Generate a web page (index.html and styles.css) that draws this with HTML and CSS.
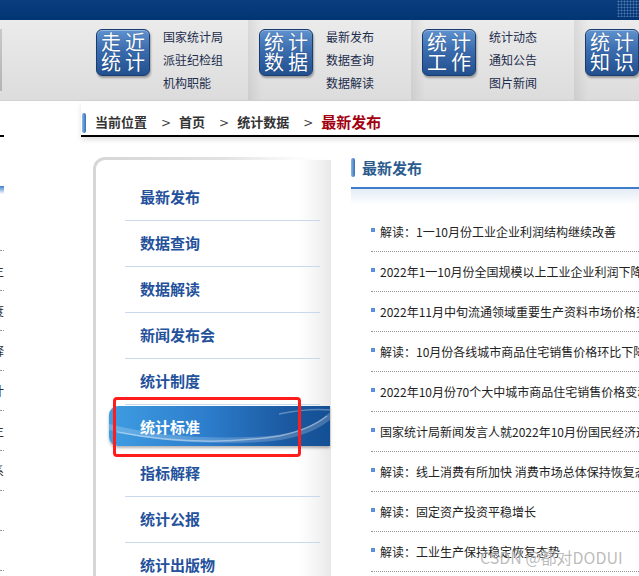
FILE: index.html
```html
<!DOCTYPE html>
<html lang="zh-CN">
<head>
    <meta charset="UTF-8">
    <meta name="viewport" content="width=device-width, initial-scale=1.0">
    <title>最新发布</title>
    <link rel="stylesheet" href="styles.css">
</head>
<body>
    <!-- 顶部蓝条 -->
    <div class="top-bar"></div>

    <!-- 导航栏 -->
    <div class="nav-bar">
        <div class="nav-lead"><span class="nav-edge"></span></div>
        <div class="nav-group">
            <div class="nav-box"><span><i>走</i><i>近</i></span><span><i>统</i><i>计</i></span></div>
            <div class="nav-links">
                <a href="#">国家统计局</a>
                <a href="#">派驻纪检组</a>
                <a href="#">机构职能</a>
            </div>
        </div>
        <div class="nav-group">
            <div class="nav-box"><span><i>统</i><i>计</i></span><span><i>数</i><i>据</i></span></div>
            <div class="nav-links">
                <a href="#">最新发布</a>
                <a href="#">数据查询</a>
                <a href="#">数据解读</a>
            </div>
        </div>
        <div class="nav-group">
            <div class="nav-box"><span><i>统</i><i>计</i></span><span><i>工</i><i>作</i></span></div>
            <div class="nav-links">
                <a href="#">统计动态</a>
                <a href="#">通知公告</a>
                <a href="#">图片新闻</a>
            </div>
        </div>
        <div class="nav-group">
            <div class="nav-box"><span><i>统</i><i>计</i></span><span><i>知</i><i>识</i></span></div>
            <div class="nav-links">
                <a href="#">统计标准</a>
                <a href="#">指标解释</a>
                <a href="#">统计百科</a>
            </div>
        </div>
    </div>

    <div class="main">
        <!-- 左侧被截断的栏 -->
        <div class="edge-col">
            <div class="edge-strip">
                <div class="edge-crumb"></div>
                <div class="edge-title"></div>
                <ul class="edge-list">
                    <li></li>
                    <li><span>统计用区划代码和城乡划分代码主</span></li>
                    <li><span>统计上大中小微型企业划分办法度</span></li>
                    <li><span>三次产业划分规定解释</span></li>
                    <li><span>国民经济行业分类统计</span></li>
                    <li><span>统计用产品分类目录主</span></li>
                    <li><span>战略性新兴产业分类体系</span></li>
                    <li></li>
                    <li></li>
                </ul>
            </div>
        </div>

        <div class="content">
            <!-- 当前位置 -->
            <div class="crumb">
                <span class="pill"></span>
                <span class="crumb-item">当前位置</span>
                <span class="crumb-sep">&gt;</span>
                <a class="crumb-item" href="#">首页</a>
                <span class="crumb-sep">&gt;</span>
                <a class="crumb-item" href="#">统计数据</a>
                <span class="crumb-sep">&gt;</span>
                <span class="crumb-current">最新发布</span>
            </div>

            <div class="body-row">
                <!-- 侧边菜单 -->
                <div class="side-panel">
                    <div class="side-inner">
                        <ul class="side-menu">
                            <li><a href="#">最新发布</a></li>
                            <li><a href="#">数据查询</a></li>
                            <li><a href="#">数据解读</a></li>
                            <li><a href="#">新闻发布会</a></li>
                            <li><a href="#">统计制度</a></li>
                            <li class="active">
                                <span class="active-bar">
                                    <svg width="221" height="40" viewBox="0 0 221 40">
                                        <path d="M0 18 Q 70 36 160 30 Q 200 26 221 6 L221 14 Q 196 34 150 36 Q 60 40 0 24 Z" fill="rgba(255,255,255,0.2)"/>
                                        <path d="M8 26 Q 90 42 170 30 Q 200 24 218 10" stroke="rgba(255,255,255,0.4)" stroke-width="1.5" fill="none"/>
                                        <path d="M170 8 Q 200 2 221 4" stroke="rgba(255,255,255,0.3)" stroke-width="1.5" fill="none"/>
                                    </svg>
                                </span>
                                <a href="#">统计标准</a>
                                <span class="mark"></span>
                            </li>
                            <li><a href="#">指标解释</a></li>
                            <li><a href="#">统计公报</a></li>
                            <li><a href="#">统计出版物</a></li>
                        </ul>
                    </div>
                </div>

                <!-- 最新发布列表 -->
                <div class="news">
                    <div class="news-title">
                        <span class="pill"></span>
                        <span class="news-title-text">最新发布</span>
                    </div>
                    <ul class="news-list">
                        <li><a href="#">解读：1一10月份工业企业利润结构继续改善</a></li>
                        <li><a href="#">2022年1一10月份全国规模以上工业企业利润下降3.0%</a></li>
                        <li><a href="#">2022年11月中旬流通领域重要生产资料市场价格变动情况</a></li>
                        <li><a href="#">解读：10月份各线城市商品住宅销售价格环比下降</a></li>
                        <li><a href="#">2022年10月份70个大中城市商品住宅销售价格变动情况</a></li>
                        <li><a href="#">国家统计局新闻发言人就2022年10月份国民经济运行情况答记者问</a></li>
                        <li><a href="#">解读：线上消费有所加快 消费市场总体保持恢复态势</a></li>
                        <li><a href="#">解读：固定资产投资平稳增长</a></li>
                        <li><a href="#">解读：工业生产保持稳定恢复态势</a></li>
                    </ul>
                </div>
            </div>
        </div>
    </div>

    <div class="watermark">CSDN @都对DODUI</div>
</body>
</html>
```

FILE: styles.css
```css
* {
    box-sizing: border-box;
}

body {
    margin: 0;
    padding: 0;
    width: 639px;
    height: 576px;
    overflow: hidden;
    position: relative;
    background-color: #fff;
    font-family: "Noto Sans CJK SC", "Liberation Sans", sans-serif;
}

a {
    color: inherit;
    text-decoration: none;
}

ul {
    list-style: none;
    margin: 0;
    padding: 0;
}

/* 顶部蓝条 */
.top-bar {
    height: 20px;
    background: linear-gradient(#0a3d7e, #023574);
    position: relative;
}

.top-bar::after {
    content: "";
    position: absolute;
    right: 0;
    top: 0;
    width: 22px;
    height: 17px;
    background-image: radial-gradient(rgba(140, 170, 215, 0.55) 0.8px, transparent 1.2px);
    background-size: 3px 3px;
}

/* 导航栏 */
.nav-bar {
    height: 81px;
    display: flex;
    width: 900px;
    background: linear-gradient(#ebebeb, #dcdcdc);
    border-bottom: 1px solid #d2d2d2;
}

.nav-lead {
    width: 85px;
    flex-shrink: 0;
    display: flex;
    align-items: center;
}

.nav-edge {
    width: 2px;
    height: 62px;
    background: linear-gradient(#c8c8c8, #b4b4b4);
}

.nav-group {
    width: 163px;
    flex-shrink: 0;
    display: flex;
    align-items: center;
    padding-left: 11px;
    gap: 13px;
}

.nav-group + .nav-group {
    background: linear-gradient(to right, rgba(0, 0, 0, 0.07), rgba(0, 0, 0, 0) 14px);
}

/* 蓝色方块图标 */
.nav-box {
    width: 54px;
    height: 47px;
    align-self: flex-start;
    margin-top: 9px;
    padding: 2px 4px 0 4px;
    border: 1px solid #1a3b6d;
    border-radius: 6px;
    background: linear-gradient(#5f92cf, #3a6cae 45%, #22508f);
    box-shadow: 1px 2px 2px rgba(0, 0, 0, 0.3), inset 0 1px 0 rgba(255, 255, 255, 0.35);
    color: #fff;
    font-size: 20px;
    line-height: 20px;
    text-shadow: 0 0 1px rgba(0, 30, 80, 0.6);
}

.nav-box span {
    display: flex;
    justify-content: space-between;
}

.nav-box i {
    font-style: normal;
}

.nav-links {
    display: flex;
    flex-direction: column;
    font-size: 12px;
    line-height: 23px;
    color: #1c2c4c;
    margin-top: -2px;
}

/* 主体 */
.main {
    display: flex;
    width: 900px;
}

.edge-col {
    width: 81px;
    flex-shrink: 0;
}

.edge-strip {
    width: 4px;
    overflow: hidden;
}

.edge-crumb {
    height: 36px;
    border-bottom: 2px solid #000;
}

.edge-title {
    height: 8px;
    margin-top: 49px;
    background: linear-gradient(#3f7fcc, #fff);
}

.edge-list {
    margin-top: 17px;
}

.edge-list li {
    height: 40px;
    border-bottom: 1px dotted #999;
    display: flex;
    align-items: center;
    justify-content: flex-end;
    white-space: nowrap;
    font-size: 12px;
    color: #333;
}

.content {
    flex: 1;
}

/* 当前位置 */
.crumb {
    height: 36px;
    padding: 12px 0 2px 1px;
    display: flex;
    align-items: center;
    border-bottom: 2px solid #000;
    box-shadow: 0 3px 5px rgba(0, 0, 0, 0.12);
    font-size: 13px;
    line-height: 20px;
    font-weight: bold;
    color: #333;
}

.crumb-item,
.crumb-current {
    position: relative;
    top: -1px;
}

.pill {
    width: 4px;
    height: 20px;
    border-radius: 2px;
    background: linear-gradient(to right, #8fb8e6, #2f6fbd);
    flex-shrink: 0;
}

.crumb .pill {
    margin-right: 9px;
}

.crumb-sep {
    font-weight: normal;
    font-family: "DejaVu Sans", sans-serif;
    font-size: 12px;
    color: #444;
    margin: 0 8px 0 14px;
}

.crumb-current {
    font-size: 15px;
    color: #a3000f;
}

.body-row {
    display: flex;
    margin-top: 20px;
    padding-left: 12px;
    gap: 20px;
}

/* 侧边菜单 */
.side-panel {
    width: 238px;
    height: 440px;
    flex-shrink: 0;
    padding: 3px 0 0 3px;
    border-radius: 12px 0 0 0;
    background: linear-gradient(to right, #d6d6d6, #e2e2e2 55%, #fbfbfb 85%, #fff);
}

.side-inner {
    height: 100%;
    padding: 15px 0 0 29px;
    border-radius: 9px 0 0 0;
    background: linear-gradient(to right, #fff 86%, #f4f4f4 94%, #e8e8e8);
}

.side-menu {
    width: 195px;
}

.side-menu li {
    height: 46px;
    padding-left: 15px;
    display: flex;
    align-items: center;
    position: relative;
    border-bottom: 1px solid #c7d9eb;
    font-size: 15px;
    font-weight: bold;
    color: #24519c;
}

.side-menu li a {
    position: relative;
    top: -1px;
    z-index: 1;
}

.side-menu li.active {
    color: #fff;
    border-bottom-color: transparent;
}

.active-bar {
    position: absolute;
    left: -16px;
    top: 1px;
    width: 221px;
    height: 40px;
    border-radius: 9px 0 0 9px;
    background: linear-gradient(to right, #3f9de2, #2c7ccb 45%, #1b5aa2 80%, #134f94);
    box-shadow: 0 2px 3px rgba(0, 0, 0, 0.3);
    overflow: hidden;
}

.active-bar svg {
    display: block;
}

/* 红色标注框 */
.mark {
    position: absolute;
    left: -12px;
    top: -8px;
    width: 188px;
    height: 60px;
    border: 3px solid #ff1c1c;
    border-radius: 4px;
    z-index: 2;
}

/* 最新发布列表 */
.news {
    width: 420px;
    flex-shrink: 0;
}

.news-title {
    height: 32px;
    padding-top: 1px;
    display: flex;
    align-items: flex-start;
    gap: 7px;
    border-bottom: 2px solid #3d7dcb;
}

.news-title .pill {
    height: 19px;
}

.news-title-text {
    font-size: 15px;
    line-height: 19px;
    font-weight: bold;
    color: #2b5b8d;
}

.news-list {
    padding: 23px 0 0 20px;
    background: linear-gradient(#e4ecf5, #fff 16px) no-repeat;
}

.news-list li {
    height: 40px;
    display: flex;
    align-items: center;
    border-bottom: 1px dotted #999;
    font-size: 12px;
    color: #222;
    white-space: nowrap;
}

.news-list li::before {
    content: "";
    width: 4px;
    height: 4px;
    margin-right: 5px;
    background-color: #5b8fdc;
    position: relative;
    top: -2px;
    flex-shrink: 0;
}

/* 水印 */
.watermark {
    position: absolute;
    left: 480px;
    top: 545px;
    font-size: 16px;
    color: rgba(130, 130, 130, 0.55);
    text-shadow: 0 0 1px rgba(255, 255, 255, 0.8);
}
```
